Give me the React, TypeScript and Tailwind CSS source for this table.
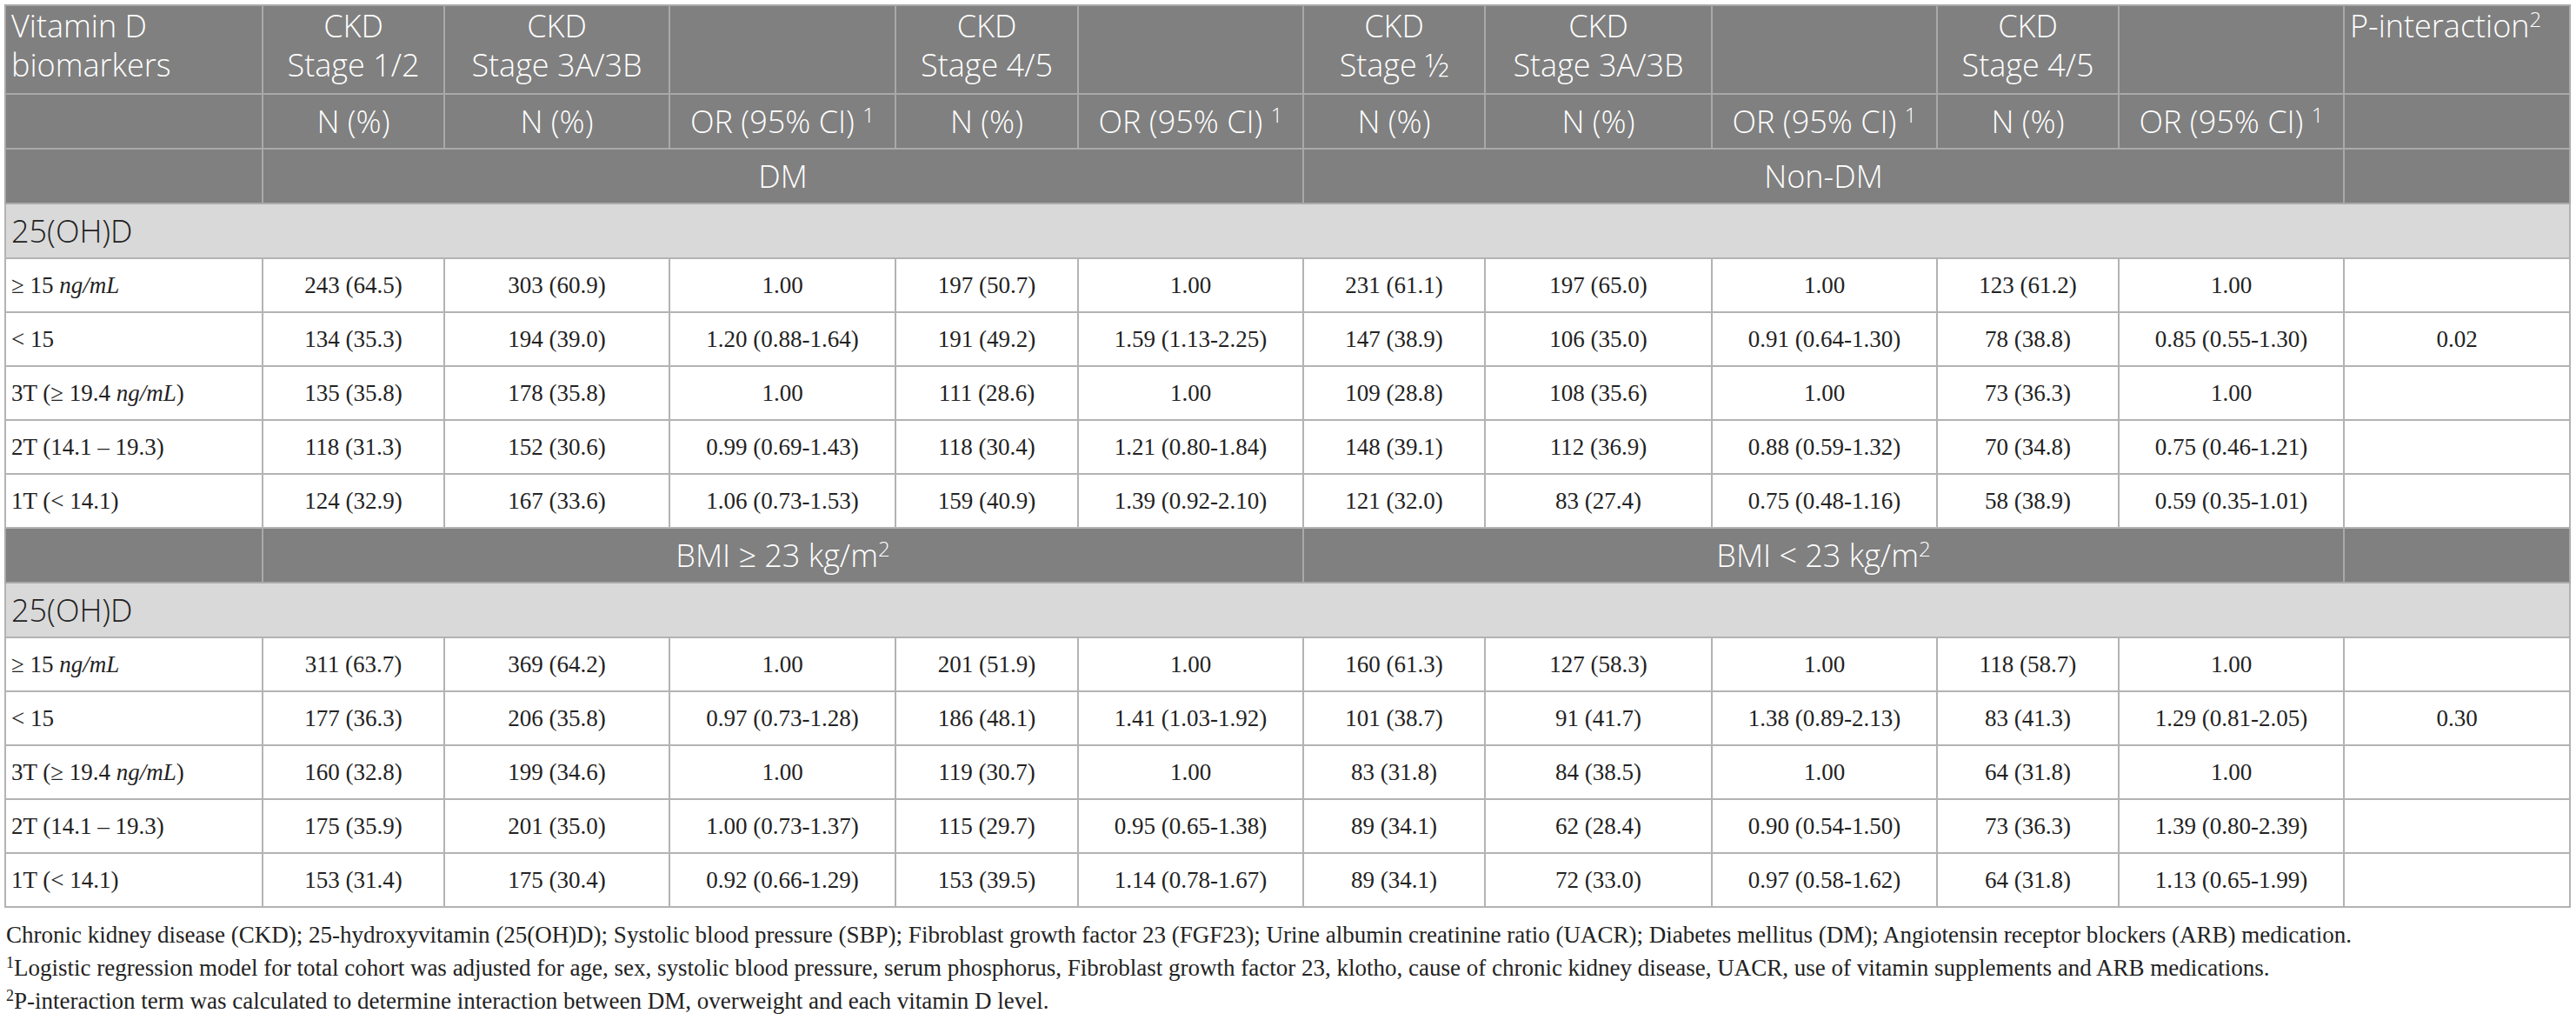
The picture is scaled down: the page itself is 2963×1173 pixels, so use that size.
import React from 'react';

const ng = <i>ng/mL</i>;

const labels: React.ReactNode[] = [
  <>≥ 15 {ng}</>,
  <>&lt; 15</>,
  <>3T (≥ 19.4 {ng})</>,
  <>2T (14.1 – 19.3)</>,
  <>1T (&lt; 14.1)</>,
];

const dmRows = [
  ['243 (64.5)', '303 (60.9)', '1.00', '197 (50.7)', '1.00', '231 (61.1)', '197 (65.0)', '1.00', '123 (61.2)', '1.00', ''],
  ['134 (35.3)', '194 (39.0)', '1.20 (0.88-1.64)', '191 (49.2)', '1.59 (1.13-2.25)', '147 (38.9)', '106 (35.0)', '0.91 (0.64-1.30)', '78 (38.8)', '0.85 (0.55-1.30)', '0.02'],
  ['135 (35.8)', '178 (35.8)', '1.00', '111 (28.6)', '1.00', '109 (28.8)', '108 (35.6)', '1.00', '73 (36.3)', '1.00', ''],
  ['118 (31.3)', '152 (30.6)', '0.99 (0.69-1.43)', '118 (30.4)', '1.21 (0.80-1.84)', '148 (39.1)', '112 (36.9)', '0.88 (0.59-1.32)', '70 (34.8)', '0.75 (0.46-1.21)', ''],
  ['124 (32.9)', '167 (33.6)', '1.06 (0.73-1.53)', '159 (40.9)', '1.39 (0.92-2.10)', '121 (32.0)', '83 (27.4)', '0.75 (0.48-1.16)', '58 (38.9)', '0.59 (0.35-1.01)', ''],
];

const bmiRows = [
  ['311 (63.7)', '369 (64.2)', '1.00', '201 (51.9)', '1.00', '160 (61.3)', '127 (58.3)', '1.00', '118 (58.7)', '1.00', ''],
  ['177 (36.3)', '206 (35.8)', '0.97 (0.73-1.28)', '186 (48.1)', '1.41 (1.03-1.92)', '101 (38.7)', '91 (41.7)', '1.38 (0.89-2.13)', '83 (41.3)', '1.29 (0.81-2.05)', '0.30'],
  ['160 (32.8)', '199 (34.6)', '1.00', '119 (30.7)', '1.00', '83 (31.8)', '84 (38.5)', '1.00', '64 (31.8)', '1.00', ''],
  ['175 (35.9)', '201 (35.0)', '1.00 (0.73-1.37)', '115 (29.7)', '0.95 (0.65-1.38)', '89 (34.1)', '62 (28.4)', '0.90 (0.54-1.50)', '73 (36.3)', '1.39 (0.80-2.39)', ''],
  ['153 (31.4)', '175 (30.4)', '0.92 (0.66-1.29)', '153 (39.5)', '1.14 (0.78-1.67)', '89 (34.1)', '72 (33.0)', '0.97 (0.58-1.62)', '64 (31.8)', '1.13 (0.65-1.99)', ''],
];

// column widths read off the reference
const widths = [296, 209, 259, 260, 210, 259, 209, 261, 259, 209, 259, 260];

const head = 'border-2 border-[#a9a9a9] bg-[#808080] text-white font-light';
const cell = 'border-2 border-[#b3b3b3] h-[62px] text-center align-middle';

function Or() {
  return (
    <>
      OR (95% CI) <sup className="text-[24px]">1</sup>
    </>
  );
}

function Section({ title, rows }: { title: React.ReactNode; rows: string[][] }) {
  return (
    <>
      <tr>
        <td colSpan={12} className="border-2 border-[#b3b3b3] bg-[#d9d9d9] h-[63px] px-[6px] text-[#222] font-['Open_Sans',sans-serif] text-[36px] font-light">
          {title}
        </td>
      </tr>
      {rows.map((r, i) => (
        <tr key={i} className="font-['Liberation_Serif',serif] text-[27px] text-[#222]">
          <td className="border-2 border-[#b3b3b3] h-[62px] px-[6px] text-left">{labels[i]}</td>
          {r.map((v, j) => (
            <td key={j} className={cell}>
              {v}
            </td>
          ))}
        </tr>
      ))}
    </>
  );
}

function GroupRow({ left, right }: { left: React.ReactNode; right: React.ReactNode }) {
  return (
    <tr className="font-['Open_Sans',sans-serif] text-[36px]">
      <td className={head + ' h-[63px]'}></td>
      <td colSpan={5} className={head + ' text-center'}>
        {left}
      </td>
      <td colSpan={5} className={head + ' text-center'}>
        {right}
      </td>
      <td className={head}></td>
    </tr>
  );
}

export default function App() {
  return (
    <div className="bg-white w-[2963px] h-[1173px] p-[5px]">
      <table className="border-collapse table-fixed w-[2951px]">
        <colgroup>
          {widths.map((w, i) => (
            <col key={i} style={{ width: w }} />
          ))}
        </colgroup>
        <thead className="font-['Open_Sans',sans-serif] text-[36px] leading-[45px]">
          <tr>
            <th className={head + ' h-[102px] px-[6px] text-left align-top'}>
              Vitamin D
              <br />
              biomarkers
            </th>
            <th className={head + ' align-top'}>
              CKD
              <br />
              Stage 1/2
            </th>
            <th className={head + ' align-top'}>
              CKD
              <br />
              Stage 3A/3B
            </th>
            <th className={head}></th>
            <th className={head + ' align-top'}>
              CKD
              <br />
              Stage 4/5
            </th>
            <th className={head}></th>
            <th className={head + ' align-top'}>
              CKD
              <br />
              Stage ½
            </th>
            <th className={head + ' align-top'}>
              CKD
              <br />
              Stage 3A/3B
            </th>
            <th className={head}></th>
            <th className={head + ' align-top'}>
              CKD
              <br />
              Stage 4/5
            </th>
            <th className={head}></th>
            <th className={head + ' px-[6px] text-left align-top'}>
              P-interaction<sup className="text-[24px]">2</sup>
            </th>
          </tr>
          <tr>
            <th className={head + ' h-[63px]'}></th>
            <th className={head}>N (%)</th>
            <th className={head}>N (%)</th>
            <th className={head}>
              <Or />
            </th>
            <th className={head}>N (%)</th>
            <th className={head}>
              <Or />
            </th>
            <th className={head}>N (%)</th>
            <th className={head}>N (%)</th>
            <th className={head}>
              <Or />
            </th>
            <th className={head}>N (%)</th>
            <th className={head}>
              <Or />
            </th>
            <th className={head}></th>
          </tr>
        </thead>
        <tbody>
          <GroupRow left="DM" right="Non-DM" />
          <Section title="25(OH)D" rows={dmRows} />
          <GroupRow
            left={
              <>
                BMI ≥ 23 kg/m<sup className="text-[24px]">2</sup>
              </>
            }
            right={
              <>
                BMI &lt; 23 kg/m<sup className="text-[24px]">2</sup>
              </>
            }
          />
          <Section title="25(OH)D" rows={bmiRows} />
        </tbody>
      </table>
      <div className="mt-[12px] pl-[2px] font-['Liberation_Serif',serif] text-[27px] leading-[38px] text-[#222]">
        <p>
          Chronic kidney disease (CKD); 25-hydroxyvitamin (25(OH)D); Systolic blood pressure (SBP); Fibroblast growth factor 23 (FGF23); Urine albumin creatinine ratio (UACR); Diabetes mellitus (DM); Angiotensin receptor blockers (ARB) medication.
        </p>
        <p>
          <sup className="text-[18px]">1</sup>Logistic regression model for total cohort was adjusted for age, sex, systolic blood pressure, serum phosphorus, Fibroblast growth factor 23, klotho, cause of chronic kidney disease, UACR, use of vitamin supplements and ARB medications.
        </p>
        <p>
          <sup className="text-[18px]">2</sup>P-interaction term was calculated to determine interaction between DM, overweight and each vitamin D level.
        </p>
      </div>
    </div>
  );
}
